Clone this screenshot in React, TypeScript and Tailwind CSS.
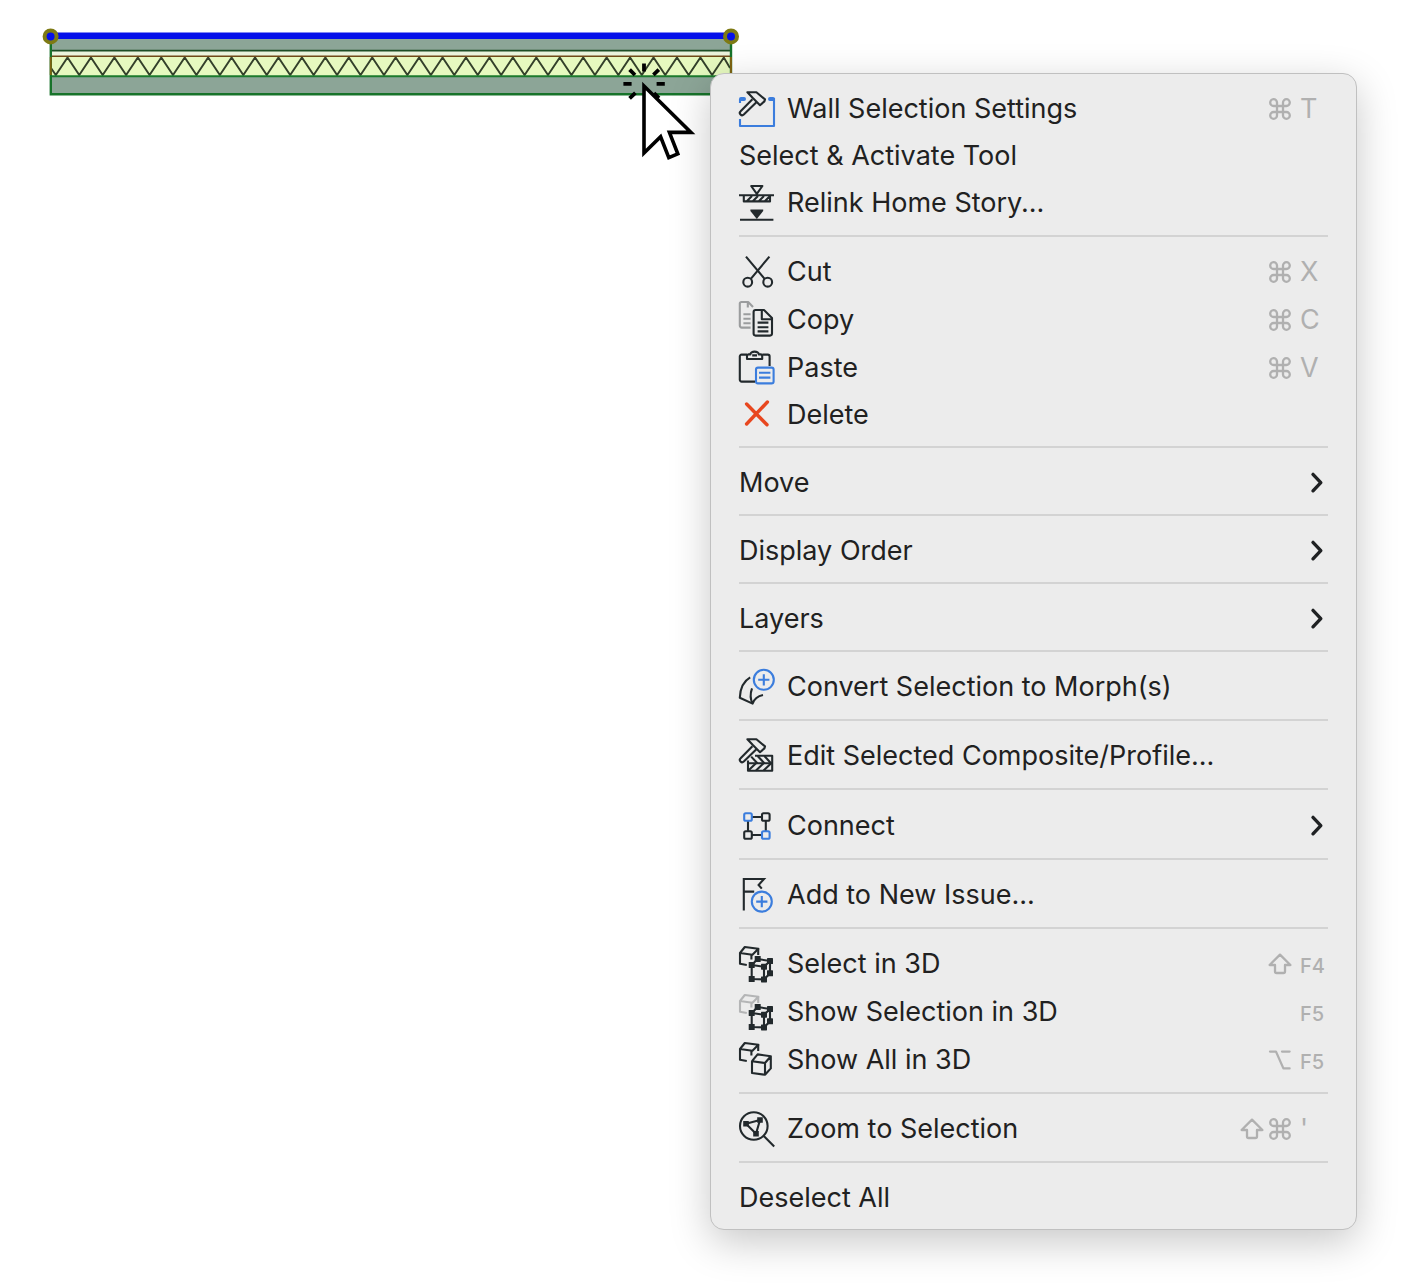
import React from 'react'
import clsx from 'clsx'

type IconProps = { children: React.ReactNode }

const Icon = ({ children }: IconProps) => (
  <svg
    viewBox="0 0 36 36"
    className="h-9 w-9 shrink-0 overflow-visible"
    fill="none"
    stroke="#22292c"
    strokeWidth="2.1"
    strokeLinejoin="round"
    aria-hidden="true"
  >
    {children}
  </svg>
)

const blue = '#3b7ddd'

const Hammer = () => (
  <>
    <path d="M8.4 1.2H17.4L26 8.4L25.4 10.4L21 14.2L13.6 6.8Z" />
    <path d="M13.4 8.2L1.6 20.2A2.2 2.2 0 0 0 4.8 23.6L17.4 11.2" />
  </>
)

const BackCube = ({ color = '#22292c' }: { color?: string }) => (
  <g stroke={color}>
    <path d="M7.8 19L1 17.8V7L5.8 1L19.4 2.8L13.4 8.8L1 7" />
    <path d="M12.4 9V13.4M19.2 3V9" />
  </g>
)

const cubeNodes = [
  [18.7, 13],
  [31, 15],
  [12.7, 19],
  [25, 20.7],
  [12.7, 33],
  [25, 33.4],
  [31, 27.3],
]

const NodeCube = () => (
  <>
    <path d="M12.7 19L25 20.7V33.4L12.7 33ZM12.7 19L18.7 13L31 15L25 20.7M31 15V27.3L25 33.4" />
    {cubeNodes.map(([x, y]) => (
      <rect key={`${x}-${y}`} x={x - 3} y={y - 3} width="6" height="6" rx="0.6" fill="#22292c" stroke="none" />
    ))}
  </>
)

const SettingsIcon = () => (
  <Icon>
    <path d="M1 12V8M1 28V35H35V7" stroke={blue} />
    <path d="M2 8H5M31 8H34" stroke={blue} strokeWidth="4" strokeLinecap="round" />
    <Hammer />
  </Icon>
)

const RelinkIcon = () => (
  <Icon>
    <path d="M12.2 1H23.4L17.8 8.8ZM0 10.2H35M1 34.8H34.4" />
    <path d="M4.8 10.2V16.4H31V10.2M8 16L13 11M14 16L19 11M20 16L25 11M26 16L31 11" />
    <path d="M11.4 24.4H24.2V26L17.8 34L11.4 26Z" fill="#22292c" stroke="none" />
  </Icon>
)

const CutIcon = () => (
  <Icon>
    <path d="M7 2.6L25.4 24.6M30.4 2.6L12 24.6" />
    <circle cx="8.7" cy="28.2" r="4.4" />
    <circle cx="28.7" cy="28.2" r="4.4" />
  </Icon>
)

const CopyIcon = () => (
  <Icon>
    <g stroke="#9b9d9e">
      <path d="M11.6 25.6H2.8A2 2 0 0 1 .8 23.6V1.6A1.6 1.6 0 0 1 2.4 0H9.2L14 5M8.8 0V5.6" />
      <path d="M4.4 12.2H11.6M4.4 16.8H11.6M4.4 21.2H11.6" />
    </g>
    <path d="M16.6 8H25L33 16V31.6A2 2 0 0 1 31 33.6H16.6A2 2 0 0 1 14.6 31.6V10A2 2 0 0 1 16.6 8Z" />
    <path d="M22.8 8V17.2H33M18.6 20.6H29.4M18.6 25.2H29.4M18.6 29.4H29.4" />
  </Icon>
)

const PasteIcon = () => (
  <Icon>
    <path d="M16 31.6H2.6A1.8 1.8 0 0 1 .8 29.8V6.4A1.8 1.8 0 0 1 2.6 4.6H8M23.4 4.6H28.8A1.8 1.8 0 0 1 30.6 6.4V16" />
    <path d="M8 9V6A1.6 1.6 0 0 1 9.6 4.4H11.4A4.2 2.8 0 0 1 19.8 4.4H21.6A1.6 1.6 0 0 1 23.2 6V9ZM13.2 5.4H18" />
    <rect x="17" y="17.6" width="17.6" height="15.8" rx="2" stroke={blue} />
    <path d="M20 22.8H31.4M20 27.6H31.4" stroke={blue} />
  </Icon>
)

const DeleteIcon = () => (
  <Icon>
    <path d="M7.6 7L28 27.8M28.4 5L7.6 27" stroke="#e8471f" strokeWidth="3.4" strokeLinecap="round" />
  </Icon>
)

const MorphIcon = () => (
  <Icon>
    <path d="M11.2 8.4Q1.4 14 .8 28.8L13.6 34.6Q16 27.6 24 26M13 19.4Q10 28 13.6 34.6" />
    <circle cx="24.8" cy="10.8" r="10" stroke={blue} />
    <path d="M24.8 5.2V16.4M19.2 10.8H30.4" stroke={blue} />
  </Icon>
)

const CompositeIcon = () => (
  <Icon>
    <Hammer />
    <path d="M16 17.8H33.2V32.8H9V22.6M9 25.2H33.2" />
    <path d="M12.2 18.6L18.4 25.2M18.6 18L25.4 25.2M25.4 18L32 25.2M9.4 32.4L17 25.2M17 32.4L24.6 25.2M24.6 32.4L32.2 25.2" />
  </Icon>
)

const ConnectIcon = () => (
  <Icon>
    <path d="M13 9H22.6M13 27H22.6M9 13V23M26.8 13V23" />
    <rect x="5.2" y="5.2" width="7.6" height="7.6" rx="1.6" stroke={blue} />
    <rect x="23" y="5.2" width="7.6" height="7.6" rx="1.6" />
    <rect x="5.2" y="23.2" width="7.6" height="7.6" rx="1.6" />
    <rect x="23" y="23.2" width="7.6" height="7.6" rx="1.6" stroke={blue} />
  </Icon>
)

const IssueIcon = () => (
  <Icon>
    <path d="M4.8 33.4V2H25L19.6 8L22.8 11.6M4.8 14.6H15.2" strokeLinejoin="miter" />
    <circle cx="22.8" cy="24.6" r="10" stroke={blue} />
    <path d="M22.8 19V30.2M17.2 24.6H28.4" stroke={blue} />
  </Icon>
)

const SelectIn3DIcon = () => (
  <Icon>
    <BackCube />
    <NodeCube />
  </Icon>
)

const ShowSelectionIcon = () => (
  <Icon>
    <BackCube color="#b4b5b6" />
    <NodeCube />
  </Icon>
)

const ShowAllIcon = () => (
  <Icon>
    <BackCube />
    <path d="M13 19.2L26 21V32.8L13 31ZM13 19.2L18.6 12.4L31.8 14.2L26 21M31.8 14.2V26.4L26 32.8" />
  </Icon>
)

const ZoomIcon = () => (
  <Icon>
    <circle cx="14.8" cy="15" r="13.8" />
    <path d="M24.8 25L35.2 35.4M7 12.7L21 9L17 22.7Z" />
    <path d="M4.2 9.9h5.6v5.6h-5.6ZM18.2 6.2h5.6v5.6h-5.6ZM14.2 19.9h5.6v5.6h-5.6Z" fill="#22292c" stroke="none" />
  </Icon>
)

const Chevron = () => (
  <svg viewBox="0 0 16 24" className="mr-1 h-6 w-4" fill="none" stroke="#1f2123" strokeWidth="3.4" aria-hidden="true">
    <path d="M5 3.4L12.8 11.6L5 19.8" strokeLinecap="round" strokeLinejoin="round" />
  </svg>
)

type Modifier = 'command' | 'shift' | 'option'

const modifierPaths: Record<Modifier, string> = {
  command:
    'M9 9V5.4A3.4 3.4 0 1 0 5.6 9H18.4A3.4 3.4 0 1 0 15 5.6V18.4A3.4 3.4 0 1 0 18.4 15H5.6A3.4 3.4 0 1 0 9 18.4V9',
  shift: 'M12 2.6L22.4 13H17V19.4A1.6 1.6 0 0 1 15.4 21H8.6A1.6 1.6 0 0 1 7 19.4V13H1.6Z',
  option: 'M2 3.6H8L15.4 20.4H21.6M14 3.6H21.6',
}

const ModifierKey = ({ name }: { name: Modifier }) => (
  <svg
    viewBox="0 0 24 24"
    className="h-6 w-6"
    fill="none"
    stroke="currentColor"
    strokeWidth="2.3"
    strokeLinecap="round"
    strokeLinejoin="round"
    role="img"
    aria-label={name}
  >
    <path d={modifierPaths[name]} />
  </svg>
)

type MenuItem = {
  label: string
  icon?: React.ReactNode
  modifiers?: Modifier[]
  shortcut?: string
  submenu?: boolean
}

const groups: MenuItem[][] = [
  [
    { label: 'Wall Selection Settings', icon: <SettingsIcon />, modifiers: ['command'], shortcut: 'T' },
    { label: 'Select & Activate Tool' },
    { label: 'Relink Home Story...', icon: <RelinkIcon /> },
  ],
  [
    { label: 'Cut', icon: <CutIcon />, modifiers: ['command'], shortcut: 'X' },
    { label: 'Copy', icon: <CopyIcon />, modifiers: ['command'], shortcut: 'C' },
    { label: 'Paste', icon: <PasteIcon />, modifiers: ['command'], shortcut: 'V' },
    { label: 'Delete', icon: <DeleteIcon /> },
  ],
  [{ label: 'Move', submenu: true }],
  [{ label: 'Display Order', submenu: true }],
  [{ label: 'Layers', submenu: true }],
  [{ label: 'Convert Selection to Morph(s)', icon: <MorphIcon /> }],
  [{ label: 'Edit Selected Composite/Profile...', icon: <CompositeIcon /> }],
  [{ label: 'Connect', icon: <ConnectIcon />, submenu: true }],
  [{ label: 'Add to New Issue...', icon: <IssueIcon /> }],
  [
    { label: 'Select in 3D', icon: <SelectIn3DIcon />, modifiers: ['shift'], shortcut: 'F4' },
    { label: 'Show Selection in 3D', icon: <ShowSelectionIcon />, shortcut: 'F5' },
    { label: 'Show All in 3D', icon: <ShowAllIcon />, modifiers: ['option'], shortcut: 'F5' },
  ],
  [{ label: 'Zoom to Selection', icon: <ZoomIcon />, modifiers: ['shift', 'command'], shortcut: "'" }],
  [{ label: 'Deselect All' }],
]

const Shortcut = ({ modifiers = [], shortcut }: { modifiers?: Modifier[]; shortcut: string }) => (
  <kbd className="flex items-center font-['Inter',sans-serif] text-[#b0b0b0]">
    <span className="flex gap-1">
      {modifiers.map((name) => (
        <ModifierKey key={name} name={name} />
      ))}
    </span>
    <span className={clsx('ml-2 w-7', shortcut.length > 1 ? 'pt-1 text-xl font-medium' : 'text-[27px]')}>
      {shortcut}
    </span>
  </kbd>
)

const MenuRow = ({ item }: { item: MenuItem }) => (
  <button
    type="button"
    role="menuitem"
    aria-haspopup={item.submenu ? 'menu' : undefined}
    className={clsx(
      'flex w-full items-center gap-3 text-left',
      item.icon && item.label !== 'Delete' ? 'h-12' : 'h-[46px]'
    )}
  >
    {item.icon}
    <span className="flex-1 whitespace-nowrap">{item.label}</span>
    {item.shortcut && <Shortcut modifiers={item.modifiers} shortcut={item.shortcut} />}
    {item.submenu && <Chevron />}
  </button>
)

const ContextMenu = () => (
  <div
    role="menu"
    className="absolute top-[73px] left-[710px] w-[647px] rounded-[14px] border border-[#c0c0c0] bg-[#ececec] px-7 pt-[11px] pb-2 font-['Inter',sans-serif] text-[27px] leading-8 text-[#212121] shadow-[0_12px_40px_rgba(0,0,0,0.22)]"
  >
    {groups.map((group, i) => (
      <React.Fragment key={group[0].label}>
        {i > 0 && (
          <hr
            className={clsx(
              'mt-2 h-[2px] border-0 bg-[#d3d3d3]',
              group[0].submenu || !group[0].icon ? 'mb-3' : 'mb-[11px]'
            )}
          />
        )}
        {group.map((item) => (
          <MenuRow key={item.label} item={item} />
        ))}
      </React.Fragment>
    ))}
  </div>
)

// insulation hatch: one full zigzag every 23.45 units
const zigzag = Array.from({ length: 58 }, (_, i) => `${55.8 + i * 11.72},${i % 2 ? 57.5 : 75}`).join(' ')

const WallDrawing = () => (
  <svg viewBox="40 24 704 140" className="h-[140px] w-[704px]" fill="none" role="img" aria-label="Selected wall">
    <rect x="50" y="38" width="682" height="56" fill="#8ca597" />
    <rect x="50" y="50" width="682" height="7" fill="#eaf3dc" />
    <rect x="50" y="57" width="682" height="19" fill="#e6f9bf" />
    <polyline points={`51,68 ${zigzag} 730,68`} stroke="#33402a" strokeWidth="1.9" />
    <path d="M50 50.6H732" stroke="#1c4d24" strokeWidth="1.6" />
    <path d="M50 56.2H732" stroke="#704a18" strokeWidth="1.6" />
    <path d="M50 76.2H732" stroke="#1b7a2c" strokeWidth="2" />
    <path d="M50.8 38V94.2H731V38" stroke="#17732a" strokeWidth="2.4" />
    <path d="M50.8 57V75M731 57V75" stroke="#7d6412" strokeWidth="2" />
    <path d="M50 35.8H732" stroke="#0510ea" strokeWidth="6.4" />
    <circle cx="50.6" cy="36.4" r="6" fill="#0510ea" stroke="#7e7a14" strokeWidth="4" />
    <circle cx="731" cy="36.4" r="6" fill="#0510ea" stroke="#7e7a14" strokeWidth="4" />
    <path
      d="M644 63.4V71.6M623.4 83.8H631.6M656.6 83.8H664.8M629.6 69.6L635 75M658.8 69.6L653.4 74.8M629.6 98.4L635.4 92.8M659 98L654 93"
      stroke="#000"
      strokeWidth="3.8"
    />
    <path
      d="M644 86V153L660.6 136.8L668.8 157.6L677.8 153.8L669.4 132.4H691Z"
      fill="#fff"
      stroke="#000"
      strokeWidth="3.6"
    />
  </svg>
)

const App = () => {
  return (
    <main className="relative min-h-screen overflow-hidden bg-white pt-6 pl-10">
      <WallDrawing />
      <ContextMenu />
    </main>
  )
}

export default App
